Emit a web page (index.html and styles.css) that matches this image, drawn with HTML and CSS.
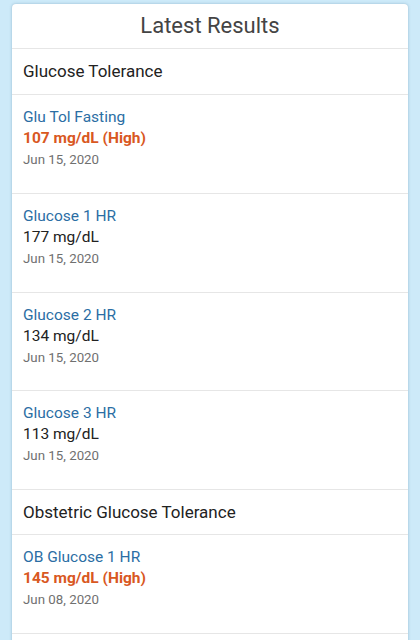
FILE: index.html
```html
<!DOCTYPE html>
<html>

<head lang="en">
	<meta charset="UTF-8">
	<title>Latest Results</title>
	<link rel="stylesheet" href="styles.css">
</head>

<body>
	<div class="card">
		<div class="card-title">Latest Results</div>

		<div class="group">Glucose Tolerance</div>
		<div class="result">
			<div class="result-name">Glu Tol Fasting</div>
			<div class="result-value high">107 mg/dL (High)</div>
			<div class="result-date">Jun 15, 2020</div>
		</div>
		<div class="result">
			<div class="result-name">Glucose 1 HR</div>
			<div class="result-value">177 mg/dL</div>
			<div class="result-date">Jun 15, 2020</div>
		</div>
		<div class="result short">
			<div class="result-name">Glucose 2 HR</div>
			<div class="result-value">134 mg/dL</div>
			<div class="result-date">Jun 15, 2020</div>
		</div>
		<div class="result">
			<div class="result-name">Glucose 3 HR</div>
			<div class="result-value">113 mg/dL</div>
			<div class="result-date">Jun 15, 2020</div>
		</div>

		<div class="group second">Obstetric Glucose Tolerance</div>
		<div class="result">
			<div class="result-name">OB Glucose 1 HR</div>
			<div class="result-value high">145 mg/dL (High)</div>
			<div class="result-date">Jun 08, 2020</div>
		</div>
	</div>
</body>

</html>
```

FILE: styles.css
```css
* {
	margin: 0;
	padding: 0;
	box-sizing: border-box;
}

body {
	background: #cdeaf9;
	font-family: Roboto, "Liberation Sans", sans-serif;
	overflow: hidden;
	padding: 4px 12px 0;
}

.card {
	background: #fff;
	border-radius: 4px;
	box-shadow: 0 0 3px rgba(80, 120, 150, .45);
	padding-bottom: 60px;
}

.card-title {
	height: 45px;
	line-height: 44px;
	text-align: center;
	font-size: 22px;
	color: #444;
	border-bottom: 1px solid #e6e6e6;
}

.group {
	height: 46px;
	line-height: 45px;
	padding-left: 11px;
	font-size: 17px;
	color: #222;
	border-bottom: 1px solid #e6e6e6;
}

.group.second {
	height: 45px;
	line-height: 44px;
}

.result {
	height: 99px;
	padding: 12px 11px 0;
	border-bottom: 1px solid #e6e6e6;
	line-height: 21px;
}

.result.short {
	height: 98px;
}

.result-name {
	font-size: 15.5px;
	color: #2b6ea4;
}

.result-value {
	font-size: 15.5px;
	color: #222;
}

.result-value.high {
	color: #d9581f;
	font-weight: bold;
}

.result-date {
	font-size: 13.3px;
	color: #707070;
}
```
